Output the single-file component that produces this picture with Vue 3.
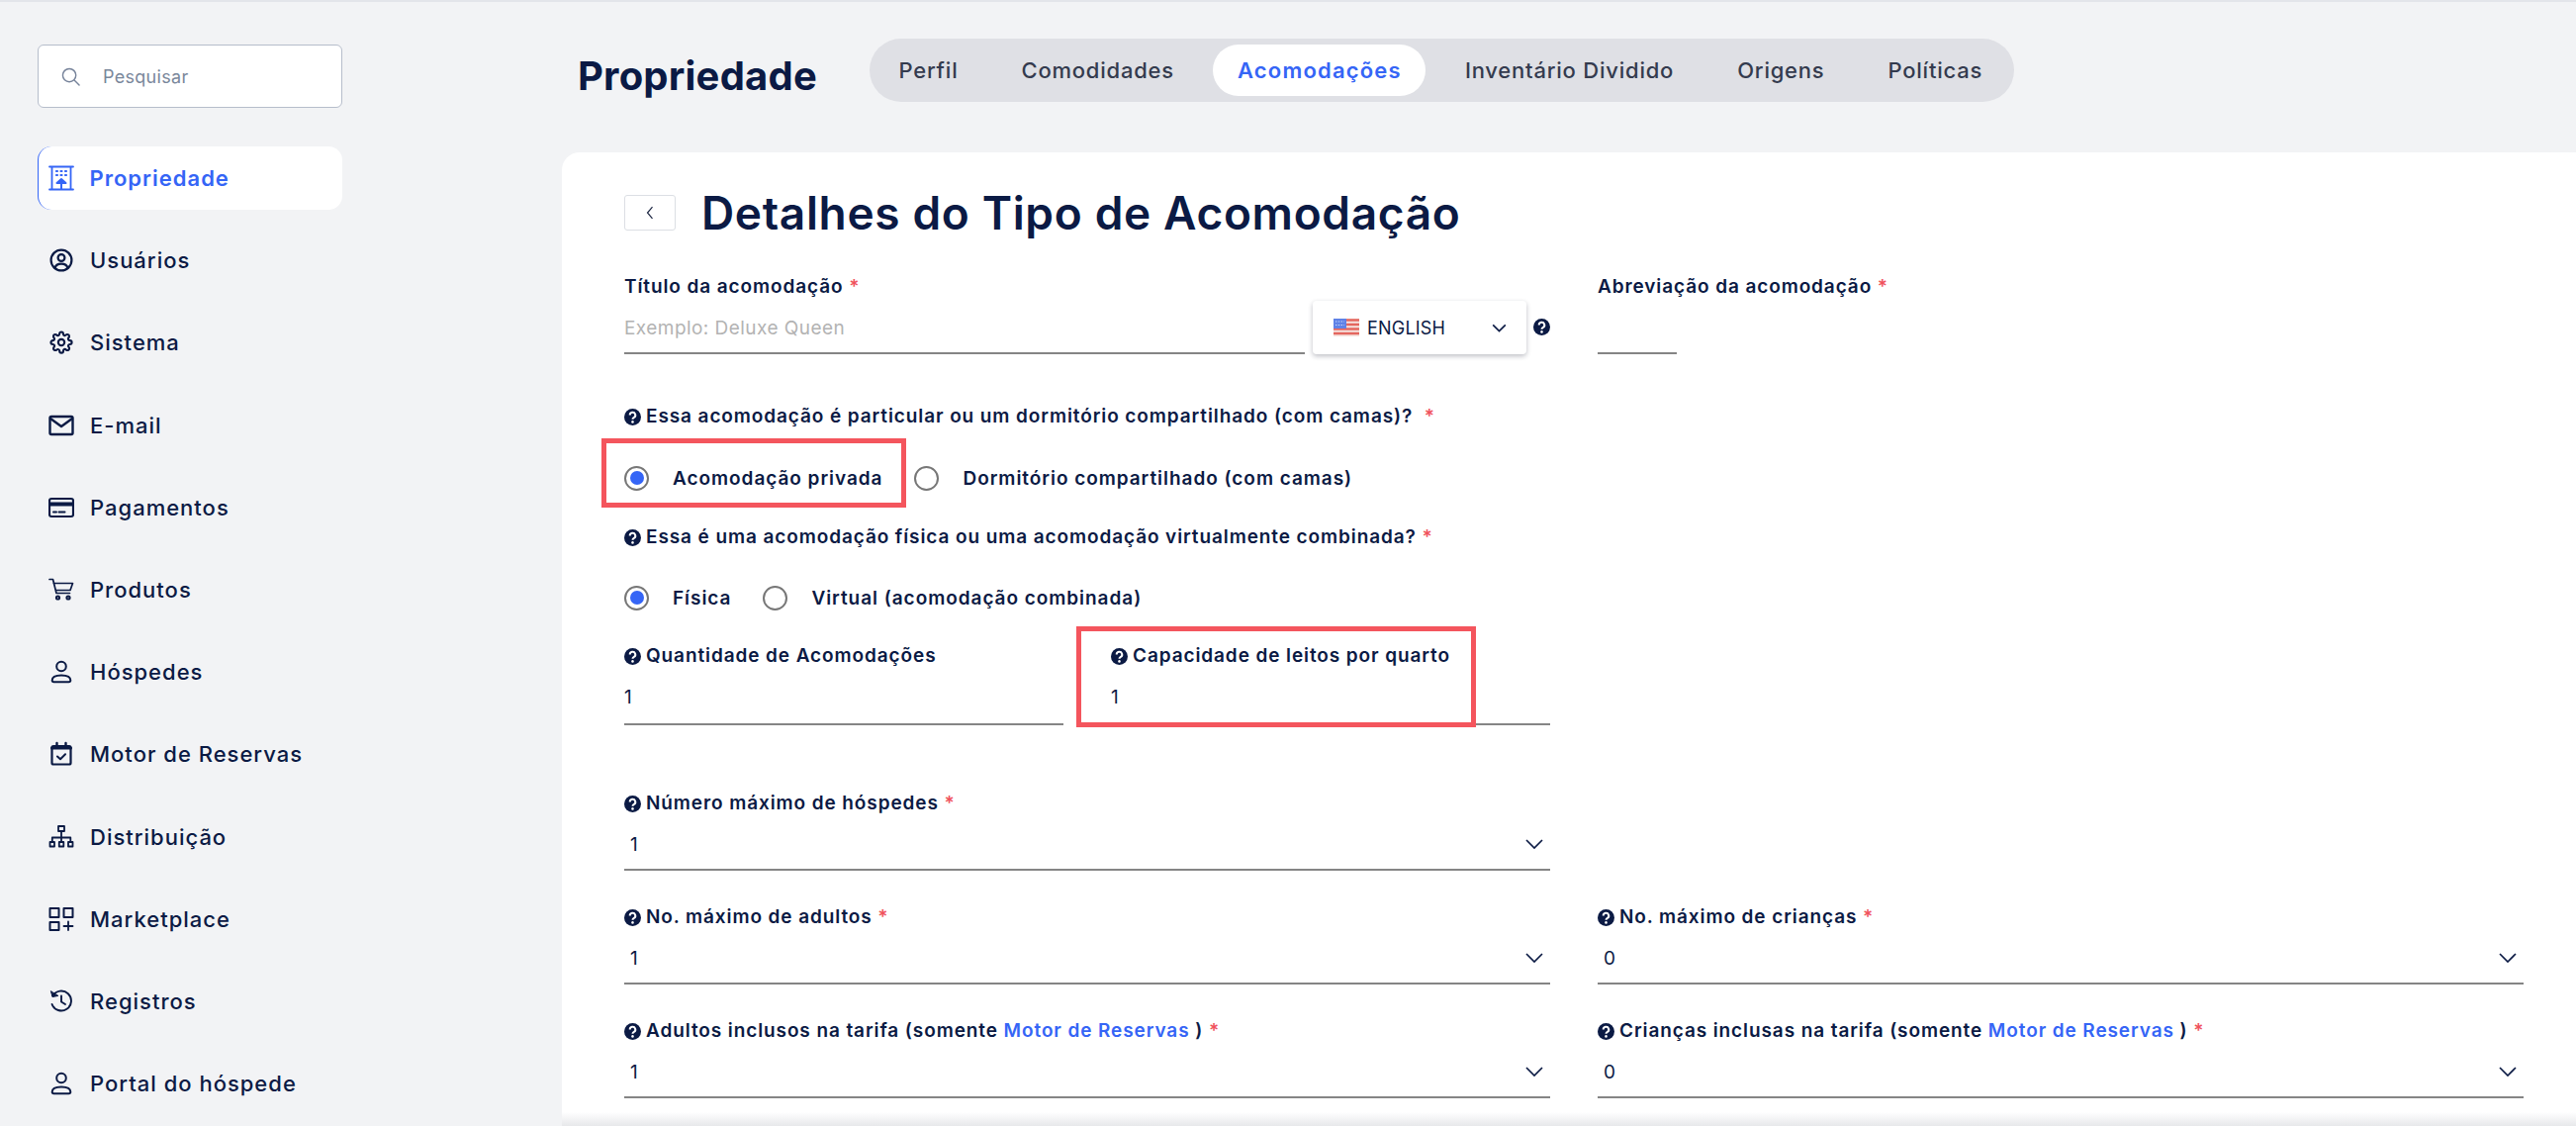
<template>
  <div class="page">
    <aside class="sidebar">
      <div class="search">
        <svg class="search-icon" viewBox="0 0 20 20" fill="none" stroke="#76839a" stroke-width="1.5"><circle cx="8.5" cy="8.5" r="7" /><path d="M14 14l5 5" stroke-linecap="round" /></svg>
        <span>Pesquisar</span>
      </div>
      <nav class="nav">
        <a v-for="item in navItems" :key="item.label" class="nav-item" :class="{ active: item.active }">
          <svg class="nav-icon" viewBox="0 0 26 26" fill="none" stroke="currentColor" stroke-width="2" stroke-linecap="round" stroke-linejoin="round" v-html="icons[item.icon]"></svg>
          <span>{{ item.label }}</span>
        </a>
      </nav>
    </aside>

    <main class="main">
      <header class="top">
        <h2 class="page-title">Propriedade</h2>
        <div class="tabs">
          <span v-for="tab in tabs" :key="tab" class="tab" :class="{ active: tab === 'Acomodações' }">{{ tab }}</span>
        </div>
      </header>

      <section class="card">
        <div class="heading">
          <button class="back">
            <svg viewBox="0 0 12 18" width="10" height="16" fill="none" stroke="#1a2440" stroke-width="1.4"><path d="M9 2L3 9l6 7" /></svg>
          </button>
          <h1>Detalhes do Tipo de Acomodação</h1>
        </div>

        <div class="columns row-title">
          <div>
            <label class="label">Título da acomodação <em>*</em></label>
            <div class="title-input">
              <div class="control grow placeholder">Exemplo: Deluxe Queen</div>
              <div class="lang">
                <svg class="flag" viewBox="0 0 26 18">
                  <rect width="26" height="18" fill="#f6e4e0" />
                  <path d="M0 1.5h26M0 6h26M0 10.5h26M0 15h26" stroke="#e4675f" stroke-width="2.4" />
                  <rect width="13" height="10" fill="#5f82e6" />
                  <path d="M2 3h9M2 6.5h9" stroke="#c8d6f8" stroke-width="1.2" stroke-dasharray="1.4 1.4" />
                </svg>
                <span>ENGLISH</span>
                <svg class="lang-chevron" viewBox="0 0 16 10" fill="none" stroke="#0b1a44" stroke-width="1.8"><path d="M1 1.5l7 7 7-7" /></svg>
              </div>
              <svg class="help big" viewBox="0 0 16 16"><circle cx="8" cy="8" r="8" fill="#0b1a44" /><path d="M5.4 6.2a2.6 2.6 0 1 1 3.9 2.2c-.9.5-1.3.9-1.3 1.7" fill="none" stroke="#fff" stroke-width="1.9" /><circle cx="8" cy="12.6" r="1.2" fill="#fff" /></svg>
            </div>
          </div>
          <div>
            <label class="label">Abreviação da acomodação <em>*</em></label>
            <div class="control short"></div>
          </div>
        </div>

        <label class="label row-q1"><HelpIcon />Essa acomodação é particular ou um dormitório compartilhado (com camas)? &nbsp;<em>*</em></label>
        <div class="options opts1">
          <label class="option marked">
            <span class="radio on"></span>Acomodação privada
            <i class="mark mark-a"></i>
          </label>
          <label class="option"><span class="radio"></span>Dormitório compartilhado (com camas)</label>
        </div>

        <label class="label row-q2"><HelpIcon />Essa é uma acomodação física ou uma acomodação virtualmente combinada? <em>*</em></label>
        <div class="options opts2">
          <label class="option"><span class="radio on"></span>Física</label>
          <label class="option"><span class="radio"></span>Virtual (acomodação combinada)</label>
        </div>

        <div class="half-row row-qty">
          <div>
            <label class="label"><HelpIcon />Quantidade de Acomodações</label>
            <div class="control tall plain">1</div>
          </div>
          <div class="marked">
            <label class="label"><HelpIcon />Capacidade de leitos por quarto</label>
            <div class="control tall plain">1</div>
            <i class="mark mark-b"></i>
          </div>
        </div>

        <div class="columns row-guests">
          <div>
            <label class="label"><HelpIcon />Número máximo de hóspedes <em>*</em></label>
            <div class="control select">1<Chevron /></div>
          </div>
        </div>

        <div class="columns row-next">
          <div>
            <label class="label"><HelpIcon />No. máximo de adultos <em>*</em></label>
            <div class="control select">1<Chevron /></div>
          </div>
          <div>
            <label class="label"><HelpIcon />No. máximo de crianças <em>*</em></label>
            <div class="control select">0<Chevron /></div>
          </div>
        </div>

        <div class="columns row-next">
          <div>
            <label class="label"><HelpIcon />Adultos inclusos na tarifa (somente <a>Motor de Reservas</a> ) <em>*</em></label>
            <div class="control select">1<Chevron /></div>
          </div>
          <div>
            <label class="label"><HelpIcon />Crianças inclusas na tarifa (somente <a>Motor de Reservas</a> ) <em>*</em></label>
            <div class="control select">0<Chevron /></div>
          </div>
        </div>
      </section>
      <div class="fade"></div>
    </main>
  </div>
</template>

<script setup>
import { h } from 'vue'

// small inline icons used by every label / select
const HelpIcon = () => h('svg', { class: 'help', viewBox: '0 0 16 16', width: 17, height: 17, style: 'margin-right:5px;vertical-align:-3px' }, [
  h('circle', { cx: 8, cy: 8, r: 8, fill: '#0b1a44' }),
  h('path', { d: 'M5.4 6.2a2.6 2.6 0 1 1 3.9 2.2c-.9.5-1.3.9-1.3 1.7', fill: 'none', stroke: '#fff', 'stroke-width': 1.9 }),
  h('circle', { cx: 8, cy: 12.6, r: 1.2, fill: '#fff' })
])
const Chevron = () => h('svg', { viewBox: '0 0 18 10', width: 18, height: 10, fill: 'none', stroke: '#0b1a44', 'stroke-width': 1.7, style: 'position:absolute;right:7px;top:50%;margin-top:-4px' }, [
  h('path', { d: 'M1 1l8 8 8-8' })
])

const tabs = ['Perfil', 'Comodidades', 'Acomodações', 'Inventário Dividido', 'Origens', 'Políticas']

const navItems = [
  { label: 'Propriedade', icon: 'building', active: true },
  { label: 'Usuários', icon: 'userCircle' },
  { label: 'Sistema', icon: 'gear' },
  { label: 'E-mail', icon: 'mail' },
  { label: 'Pagamentos', icon: 'card' },
  { label: 'Produtos', icon: 'cart' },
  { label: 'Hóspedes', icon: 'user' },
  { label: 'Motor de Reservas', icon: 'calendar' },
  { label: 'Distribuição', icon: 'tree' },
  { label: 'Marketplace', icon: 'apps' },
  { label: 'Registros', icon: 'history' },
  { label: 'Portal do hóspede', icon: 'user' }
]

const icons = {
  building: '<path d="M1 1.5h24M1 24.5h24M3.5 1.5v23M22.5 1.5v23" stroke-width="1.8"/><path d="M8 6h1M12.5 6h1M17 6h1M8 10h1M12.5 10h1M17 10h1" stroke-width="2.2"/><path d="M8.5 18l4.5-4 4.5 4zM13 18v6" fill="currentColor" stroke-width="2"/>',
  userCircle: '<circle cx="13" cy="13" r="10.4" stroke-width="2.2"/><circle cx="13" cy="10.5" r="3.4" stroke-width="2.2"/><path d="M6.5 21c.6-3 3-4.4 6.5-4.4s5.900 1.400 6.500 4.400" stroke-width="2.2"/>',
  gear: '<g transform="translate(1.5 1.500) scale(.96)" stroke-width="2.2"><circle cx="12" cy="12" r="3.300"/><path d="M19.400 15a1.650 1.650 0 0 0 .33 1.820l.06.06a2 2 0 0 1 0 2.830 2 2 0 0 1-2.830 0l-.06-.06a1.650 1.650 0 0 0-1.820-.33 1.650 1.650 0 0 0-1 1.510V21a2 2 0 0 1-2 2 2 2 0 0 1-2-2v-.09A1.650 1.650 0 0 0 9 19.400a1.650 1.650 0 0 0-1.820.33l-.06.06a2 2 0 0 1-2.830 0 2 2 0 0 1 0-2.830l.06-.06a1.650 1.650 0 0 0 .33-1.820 1.650 1.650 0 0 0-1.510-1H3a2 2 0 0 1-2-2 2 2 0 0 1 2-2h.09A1.650 1.650 0 0 0 4.600 9a1.650 1.650 0 0 0-.33-1.820l-.06-.06a2 2 0 0 1 0-2.830 2 2 0 0 1 2.830 0l.06.06a1.650 1.650 0 0 0 1.820.33H9a1.650 1.650 0 0 0 1-1.510V3a2 2 0 0 1 2-2 2 2 0 0 1 2 2v.09a1.650 1.650 0 0 0 1 1.510 1.650 1.650 0 0 0 1.820-.33l.06-.06a2 2 0 0 1 2.830 0 2 2 0 0 1 0 2.830l-.06.06a1.650 1.650 0 0 0-.33 1.820V9a1.650 1.650 0 0 0 1.510 1H21a2 2 0 0 1 2 2 2 2 0 0 1-2 2h-.09a1.650 1.650 0 0 0-1.510 1z"/></g>',
  mail: '<rect x="1.500" y="4" width="23" height="18" rx="1.500" stroke-width="2.400"/><path d="M2 6l11 8 11-8" stroke-width="2.400"/>',
  card: '<rect x="1" y="4" width="24" height="18" rx="2" stroke-width="2.200"/><path d="M1 9.500h24" stroke-width="4"/><path d="M5 17.500h3M10.500 17.500h6" stroke-width="2"/>',
  cart: '<path d="M1 2.500h3.500l3.500 14h13.500" stroke-width="1.700"/><path d="M5.500 6.500h19l-2.500 7H8" stroke-width="1.700"/><circle cx="9.500" cy="21" r="1.600"/><circle cx="20" cy="21" r="1.600"/>',
  user: '<circle cx="13" cy="7.500" r="4.800"/><path d="M3.700 21.500c0-3 3-5 9.300-5s9.300 2 9.300 5c0 1.200-.8 1.800-1.800 1.800H5.500c-1 0-1.800-.6-1.800-1.800z"/>',
  calendar: '<rect x="3.500" y="5" width="19" height="18.500" rx="1.500" stroke-width="2.200"/><path d="M3.500 7h19" stroke-width="3"/><path d="M8.500 2v3M17.500 2v3" stroke-width="2.400"/><path d="M9 15.500l3 2.800 5-5"/>',
  tree: '<rect x="10" y="2" width="6" height="5" stroke-width="1.800"/><rect x="1.500" y="18" width="4.500" height="4.500" stroke-width="1.800"/><rect x="10.800" y="18" width="4.500" height="4.500" stroke-width="1.800"/><rect x="20" y="18" width="4.500" height="4.500" stroke-width="1.800"/><path d="M13 7v11M3.800 18v-4.500h18.500V18" stroke-width="1.800"/>',
  apps: '<rect x="1.500" y="2" width="9" height="9"/><rect x="15.500" y="2" width="9" height="9"/><rect x="1.500" y="16" width="9" height="8"/><path d="M20 15.500v8.500M15.500 20h9" stroke-width="1.800"/>',
  history: '<path d="M4.300 7.500a10 10 0 1 1-.7 8.500" stroke-width="1.900"/><path d="M2.500 3l1.500 5.500 5.500-1z" fill="currentColor" stroke-width="1"/><path d="M13 7.500v6l4 2.500" stroke-width="1.900"/>'
}
</script>

<style>
html, body {
  margin: 0;
  background: #f3f4f6;
}
</style>

<style scoped>
.page {
  display: flex;
  height: 1138px;
  overflow: hidden;
  background: #f2f3f5;
  border-top: 2px solid #e3e5ea;
  box-sizing: border-box;
  font-family: Inter, "Noto Sans", sans-serif;
  color: #0b1a44;
}
.sidebar {
  width: 568px;
  flex: none;
  padding: 43px 0 0 38px;
  box-sizing: border-box;
}
.search {
  display: flex;
  align-items: center;
  width: 308px;
  height: 64px;
  box-sizing: border-box;
  background: #fff;
  border: 1.5px solid #b6bdcb;
  border-radius: 6px;
  padding-left: 23px;
  font-size: 18px;
  color: #7a879b;
  letter-spacing: 0.3px;
}
.search-icon {
  width: 19px;
  height: 19px;
  margin-right: 23px;
}
.nav {
  display: flex;
  flex-direction: column;
  gap: 19.2px;
  margin-top: 39px;
  width: 308px;
}
.nav-item {
  display: flex;
  align-items: center;
  height: 64px;
  padding-left: 11px;
  box-sizing: border-box;
  font-size: 22px;
  font-weight: 500;
  letter-spacing: 1px;
  border-radius: 14px;
}
.nav-item.active {
  background: #fff;
  color: #3565f6;
  font-weight: 600;
  border-left: 1.5px solid #3565f6;
  padding-left: 9.500px;
}
.nav-icon {
  width: 26px;
  height: 26px;
  margin-right: 16px;
  flex: none;
}
.main {
  flex: 1;
  min-width: 0;
  position: relative;
}
.top {
  display: flex;
  align-items: center;
  margin-top: 37px;
  padding-left: 16px;
  height: 64px;
}
.page-title {
  width: 295px;
  margin: 0;
  flex: none;
  font-size: 40px;
  font-weight: 700;
  letter-spacing: 0.2px;
  position: relative;
  top: 5px;
}
.tabs {
  display: flex;
  gap: 15px;
  height: 64px;
  padding: 6px 7px 6px 5px;
  box-sizing: border-box;
  background: #dfe0e5;
  border-radius: 32px;
}
.tab {
  display: flex;
  align-items: center;
  padding: 0 24.5px;
  border-radius: 26px;
  font-size: 22px;
  font-weight: 500;
  color: #343b4e;
  letter-spacing: 0.78px;
}
.tab.active {
  background: #fff;
  color: #3565f6;
  font-weight: 600;
  letter-spacing: 1.2px;
}
.card {
  margin-top: 51px;
  height: 1000px;
  background: #fff;
  border-radius: 18px 0 0 0;
  padding: 43px 53px 0 63px;
  box-sizing: border-box;
}
.heading {
  display: flex;
  align-items: center;
  height: 36px;
  gap: 26px;
}
.back {
  width: 52px;
  height: 36px;
  padding: 0;
  background: #fff;
  border: 1.5px solid #dcdfe4;
  border-radius: 3px;
  display: flex;
  align-items: center;
  justify-content: center;
}
.heading h1 {
  margin: 0;
  font-size: 46px;
  font-weight: 600;
  letter-spacing: 0.65px;
}
.columns {
  display: grid;
  grid-template-columns: 936px 936px;
  column-gap: 48px;
}
.half-row {
  display: grid;
  grid-template-columns: 444px 444px;
  column-gap: 48px;
  width: 936px;
}
.label {
  display: block;
  height: 30px;
  line-height: 32px;
  font-size: 19px;
  font-weight: 600;
  white-space: nowrap;
  letter-spacing: 0.9px;
}
.label em {
  font-style: normal;
  color: #f0525c;
}
.label a {
  color: #3565f6;
  font-weight: 600;
}
.row-title {
  margin-top: 41px;
}
.title-input {
  display: flex;
  align-items: flex-start;
}
.control {
  position: relative;
  height: 54px;
  line-height: 55px;
  box-sizing: border-box;
  border-bottom: 2px solid #858585;
  font-size: 19px;
  letter-spacing: 0.2px;
}
.grow {
  width: 688px;
}
.placeholder {
  color: #b3b3b3;
  letter-spacing: 0.45px;
}
.short {
  width: 80px;
}
.tall {
  height: 56px;
  line-height: 56px;
}
.select {
  padding-left: 6px;
}
.lang {
  display: flex;
  align-items: center;
  width: 216px;
  height: 54px;
  margin-left: 8px;
  padding-left: 21px;
  box-sizing: border-box;
  background: #fff;
  border-radius: 4px;
  box-shadow: 0 2px 5px rgba(20, 25, 45, 0.28);
  font-size: 18px;
  letter-spacing: 0.2px;
}
.flag {
  width: 26px;
  height: 18px;
  margin-right: 8px;
}
.lang-chevron {
  width: 15px;
  height: 9px;
  margin-left: 47px;
}
.help.big {
  width: 17px;
  height: 17px;
  margin: 18px 0 0 7px;
  flex: none;
}
.row-q1 {
  margin-top: 47px;
}
.options {
  display: flex;
  align-items: center;
  gap: 32px;
  height: 50px;
  font-size: 19px;
  font-weight: 600;
  letter-spacing: 0.95px;
}
.opts1 {
  margin-top: 23px;
}
.opts2 {
  margin-top: 22px;
}
.row-q2 {
  margin-top: 19px;
}
.option {
  display: flex;
  align-items: center;
  position: relative;
  white-space: nowrap;
}
.radio {
  width: 25px;
  height: 25px;
  margin-right: 24px;
  box-sizing: border-box;
  border: 2.500px solid #777;
  border-radius: 50%;
  position: relative;
}
.radio.on::after {
  content: "";
  position: absolute;
  inset: 3.500px;
  border-radius: 50%;
  background: #3565f6;
}
.marked {
  position: relative;
}
.mark {
  position: absolute;
  box-sizing: border-box;
  border: 5px solid #f4555d;
  pointer-events: none;
}
.mark-a {
  left: -23px;
  top: -27.5px;
  width: 308px;
  height: 70px;
}
.mark-b {
  left: -35px;
  top: -14px;
  width: 404px;
  height: 102px;
}
.row-qty {
  margin-top: 18px;
}
.row-guests {
  margin-top: 63px;
}
.row-next {
  margin-top: 31px;
}
.fade {
  position: absolute;
  left: 0;
  right: 0;
  bottom: 0;
  height: 14px;
  background: linear-gradient(rgba(235, 236, 238, 0), rgba(225, 226, 229, 0.8));
}
</style>
